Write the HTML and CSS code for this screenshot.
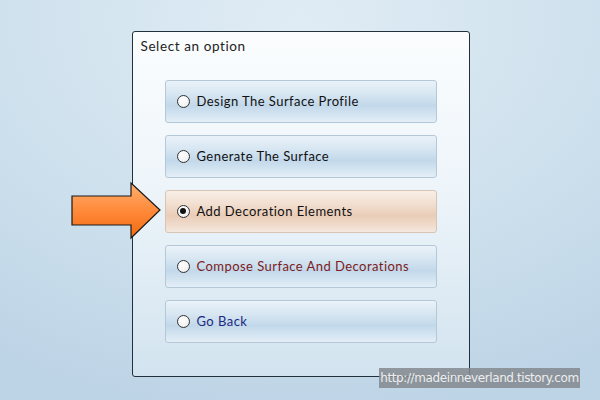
FILE: index.html
```html
<!DOCTYPE html>
<html lang="en">
<head>
    <meta charset="UTF-8">
    <title>Select an option</title>
    <link rel="stylesheet" href="styles.css">
</head>
<body>
    <div id="stage">
        <div id="panel">
            <div id="panel-title">Select an option</div>
            <ul id="options">
                <li class="option"><span class="radio"></span>Design The Surface Profile</li>
                <li class="option"><span class="radio"></span>Generate The Surface</li>
                <li class="option selected"><span class="radio"></span>Add Decoration Elements</li>
                <li class="option red"><span class="radio"></span>Compose Surface And Decorations</li>
                <li class="option blue"><span class="radio"></span>Go Back</li>
            </ul>
        </div>
        <svg id="arrow" width="92" height="60" viewBox="0 0 92 60">
            <defs>
                <linearGradient id="arrow-fill" x1="0" y1="0" x2="0" y2="1">
                    <stop offset="0" stop-color="#ffb070"/>
                    <stop offset="0.5" stop-color="#ff8a3a"/>
                    <stop offset="1" stop-color="#f26a10"/>
                </linearGradient>
            </defs>
            <polygon points="1,14 60,14 60,1 89,28 60,56 60,43 1,43" fill="url(#arrow-fill)" stroke="#1a1a1a" stroke-width="1.2" stroke-linejoin="miter"/>
        </svg>
        <div id="watermark">http://madeinneverland.tistory.com</div>
    </div>
</body>
</html>
```

FILE: styles.css
```css
body {
    margin: 0;
    width: 600px;
    height: 400px;
    overflow: hidden;
    background: radial-gradient(ellipse 560px 400px at 300px 20px, #e0ecf5 0%, #d0e2ee 50%, #bdd4e6 100%);
    font-family: "Lato", "DejaVu Sans", sans-serif;
}
#stage {
    position: relative;
    width: 600px;
    height: 400px;
    display: flex;
    justify-content: center;
    padding-top: 31px;
    box-sizing: border-box;
}
#panel {
    width: 338px;
    height: 346px;
    margin-left: 1px;
    box-sizing: border-box;
    border: 1px solid #22303c;
    border-radius: 3px;
    background: linear-gradient(to bottom, #fbfdfe 0%, #eef5fa 45%, #d2e3ef 100%);
    padding: 7px 0 0 0;
}
#panel-title {
    font-size: 13.5px;
    color: #222;
    padding-left: 8px;
    height: 15px;
    line-height: 15px;
    letter-spacing: 0.6px;
}
#options {
    list-style: none;
    margin: 26px 0 0 32px;
    padding: 0;
    display: flex;
    flex-direction: column;
    gap: 12px;
}
.option {
    width: 272px;
    height: 43px;
    box-sizing: border-box;
    border: 1px solid #b4c8d8;
    border-radius: 3px;
    background: linear-gradient(to bottom, #eaf2f9 0%, #d8e7f2 30%, #c2d8ea 60%, #d6e6f2 85%, #e4eef6 100%);
    display: flex;
    align-items: center;
    padding: 0 0 2px 11px;
    font-size: 13px;
    color: #111;
    letter-spacing: 0.45px;
}
.option.selected {
    border-color: #d7c4b4;
    background: linear-gradient(to bottom, #f8efe7 0%, #f2e0d2 30%, #eacdb8 60%, #f0dccd 85%, #f5e9df 100%);
}
.option.red {
    color: #7c1b20;
}
.option.blue {
    color: #1b2a80;
}
.radio {
    width: 11px;
    height: 11px;
    border: 1px solid #333;
    border-radius: 50%;
    background: radial-gradient(circle at 40% 35%, #ffffff 0%, #f3f3f3 60%, #dcdcdc 100%);
    margin: 1px 7px 0 0;
    position: relative;
    flex-shrink: 0;
}
.selected .radio::after {
    content: "";
    position: absolute;
    left: 2.5px;
    top: 2.5px;
    width: 6px;
    height: 6px;
    border-radius: 50%;
    background: #111;
}
#arrow {
    position: absolute;
    left: 71px;
    top: 182px;
}
#watermark {
    position: absolute;
    left: 379px;
    top: 368px;
    width: 201px;
    height: 20px;
    background: rgba(130, 136, 142, 0.85);
    color: #eeeeee;
    font-family: "DejaVu Sans", sans-serif;
    font-size: 12px;
    line-height: 20px;
    text-align: center;
    white-space: nowrap;
    letter-spacing: -0.4px;
}
```
